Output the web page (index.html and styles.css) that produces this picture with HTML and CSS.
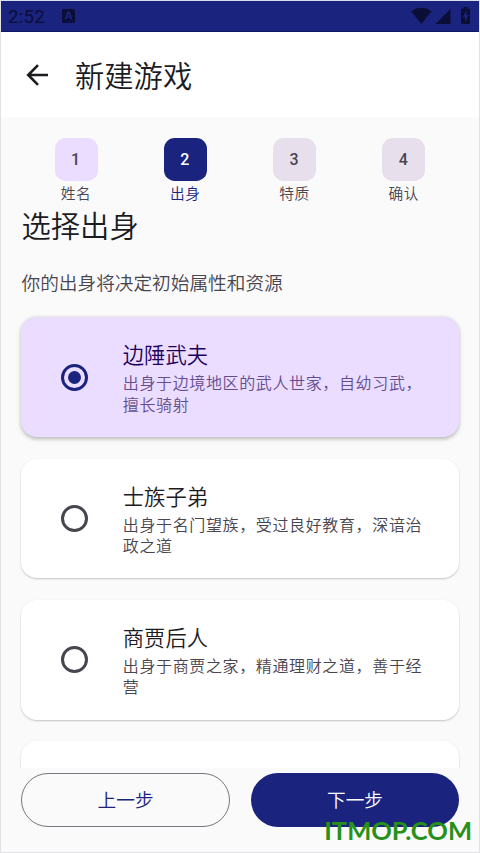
FILE: index.html
```html
<!DOCTYPE html>
<html lang="zh-CN">
<head>
<meta charset="utf-8">
<title>新建游戏</title>
<link rel="stylesheet" href="styles.css">
</head>
<body>
<div class="phone">
  <header class="status">
    <span class="time">2:52</span>
    <svg class="app-badge" width="13" height="15" viewBox="0 0 13 15"><path fill="currentColor" fill-rule="evenodd" d="M1.500 0h10A1.500 1.500 0 0 1 13 1.500V12.500A1.500 1.500 0 0 1 11.500 14H1.500A1.500 1.500 0 0 1 0 12.500V1.500A1.500 1.500 0 0 1 1.500 0zM5.400 2.500L2.500 10.500h1.800l.6-1.700h3.200l.6 1.700h1.800L7.600 2.500zM6.500 4.600l1.100 3h-2.200zM6 12v.8h1V12zM8 12v.8h1V12zM10 12v.8h1V12z"/></svg>
    <svg class="signals" width="60" height="18" viewBox="0 0 60 18"><path fill="currentColor" d="M0 4.300Q10.300-2.600 20.600 4.300L10.300 17zM24.500 17L39.500 2v15z"/><path fill="currentColor" fill-rule="evenodd" d="M52.500 0h4v1.500H58Q59 1.500 59 2.500V16q0 1-1 1h-7q-1 0-1-1V2.500q0-1 1-1h1.500zM55.500 3.500l-3.700 6.500h2.200v5l3.500-7h-2z"/></svg>
  </header>
  <div class="appbar">
    <svg width="23" height="22" viewBox="0 0 23 22" fill="none" stroke="currentColor" stroke-width="2.600"><path d="M22 11H2.500M12 1.200L2.200 11l9.800 9.800"/></svg>
    <h1>新建游戏</h1>
  </div>
  <main class="content">
    <ol class="steps">
      <li class="step done"><b>1</b><span>姓名</span></li>
      <li class="step current"><b>2</b><span>出身</span></li>
      <li class="step"><b>3</b><span>特质</span></li>
      <li class="step"><b>4</b><span>确认</span></li>
    </ol>
    <h2>选择出身</h2>
    <p class="hint">你的出身将决定初始属性和资源</p>
    <section class="cards">
      <article class="card selected"><i class="radio"></i><div class="copy"><h3>边陲武夫</h3><p>出身于边境地区的武人世家，自幼习武，<br>擅长骑射</p></div></article>
      <article class="card"><i class="radio"></i><div class="copy"><h3>士族子弟</h3><p>出身于名门望族，受过良好教育，深谙治<br>政之道</p></div></article>
      <article class="card"><i class="radio"></i><div class="copy"><h3>商贾后人</h3><p>出身于商贾之家，精通理财之道，善于经<br>营</p></div></article>
      <article class="card"></article>
    </section>
  </main>
  <footer class="actions">
    <button class="btn outline">上一步</button>
    <button class="btn filled">下一步</button>
  </footer>
  <div class="watermark">ITMOP.COM</div>
</div>
</body>
</html>
```
FILE: styles.css
```css
* { box-sizing: border-box; }
body { margin: 0; font-family: Roboto, "Noto Sans CJK SC", sans-serif; color: #1c1b1f; }
h1, h2, h3, p, ol { margin: 0; padding: 0; font-weight: 350; }
.phone { position: relative; width: 480px; height: 853px; overflow: hidden; display: flex; flex-direction: column; background: #fafafa; border: 1px solid #e2e2e4; border-top-color: #d5dff2; }
.status { flex: none; height: 31px; background: #1a237e; border-bottom: 1px solid #0f1766; color: #0b0f38; display: flex; align-items: center; padding: 0 8px 0 7px; }
.time { font-size: 18.700px; line-height: 31px; letter-spacing: .2px; width: 54px; padding-top: 2px; }
.app-badge { margin-top: 1px; }
.signals { margin-left: auto; }
.appbar { flex: none; height: 85px; background: #fff; display: flex; align-items: center; padding-left: 25px; }
.appbar svg { flex: none; }
h1 { font-size: 29.300px; line-height: 38px; margin-left: 26px; padding-top: 4px; }
.content { flex: none; height: 651px; padding: 21px 20.500px 0; overflow: hidden; }
.steps { display: flex; list-style: none; }
.step { flex: 1; display: flex; flex-direction: column; align-items: center; color: #49454f; }
.step b { width: 43px; height: 43px; border-radius: 10.700px; background: #e7e0ec; font-size: 16px; font-weight: 500; line-height: 44px; padding-right: 1px; text-align: center; }
.step span { font-size: 14.670px; letter-spacing: .67px; line-height: 21px; margin-top: 3px; font-weight: 350; }
.done b { background: #eaddff; }
.current { color: #1a237e; }
.current b { background: #1a237e; color: #fff; }
h2 { font-size: 29.300px; line-height: 38px; margin-top: 3px; }
.hint { font-size: 18.670px; line-height: 26px; margin-top: 25px; color: #49454f; }
.cards { display: grid; grid-auto-rows: 119.800px; gap: 21.500px; margin: 20.300px 0 0 -.5px; }
.card { display: flex; align-items: center; padding-left: 40px; background: #fff; border-radius: 16px; box-shadow: 0 1px 2px rgba(0,0,0,.22); }
.card.selected { background: #eaddff; box-shadow: 0 1.500px 4px rgba(0,0,0,.27); }
.radio { flex: none; display: flex; align-items: center; justify-content: center; width: 27px; height: 27px; border: 3px solid #49454f; border-radius: 50%; }
.selected .radio { border-color: #1a237e; }
.selected .radio::before { content: ""; width: 13.300px; height: 13.300px; border-radius: 50%; background: #1a237e; }
.copy { margin-left: 34.800px; padding-top: 2px; white-space: nowrap; }
h3 { font-size: 21.300px; line-height: 32px; }
.card p { font-size: 16px; letter-spacing: .63px; line-height: 21.300px; margin-top: 1px; color: #49454f; }
.selected h3 { color: #21005d; }
.card.selected p { color: #644c90; }
.actions { flex: 1; display: flex; gap: 21.300px; padding: 5px 20.500px 0 20px; }
.btn { flex: 1; height: 53.500px; padding: 2px 0 0; border-radius: 27px; font: 350 18.670px/50px Roboto, "Noto Sans CJK SC", sans-serif; }
.outline { background: transparent; border: 1.300px solid #79747e; color: #1a237e; }
.filled { background: #1a237e; border: 0; color: #fff; }
.watermark { position: absolute; right: 7px; bottom: 6px; font: 700 25.500px/32px Lato, sans-serif; color: #279018; }
```
